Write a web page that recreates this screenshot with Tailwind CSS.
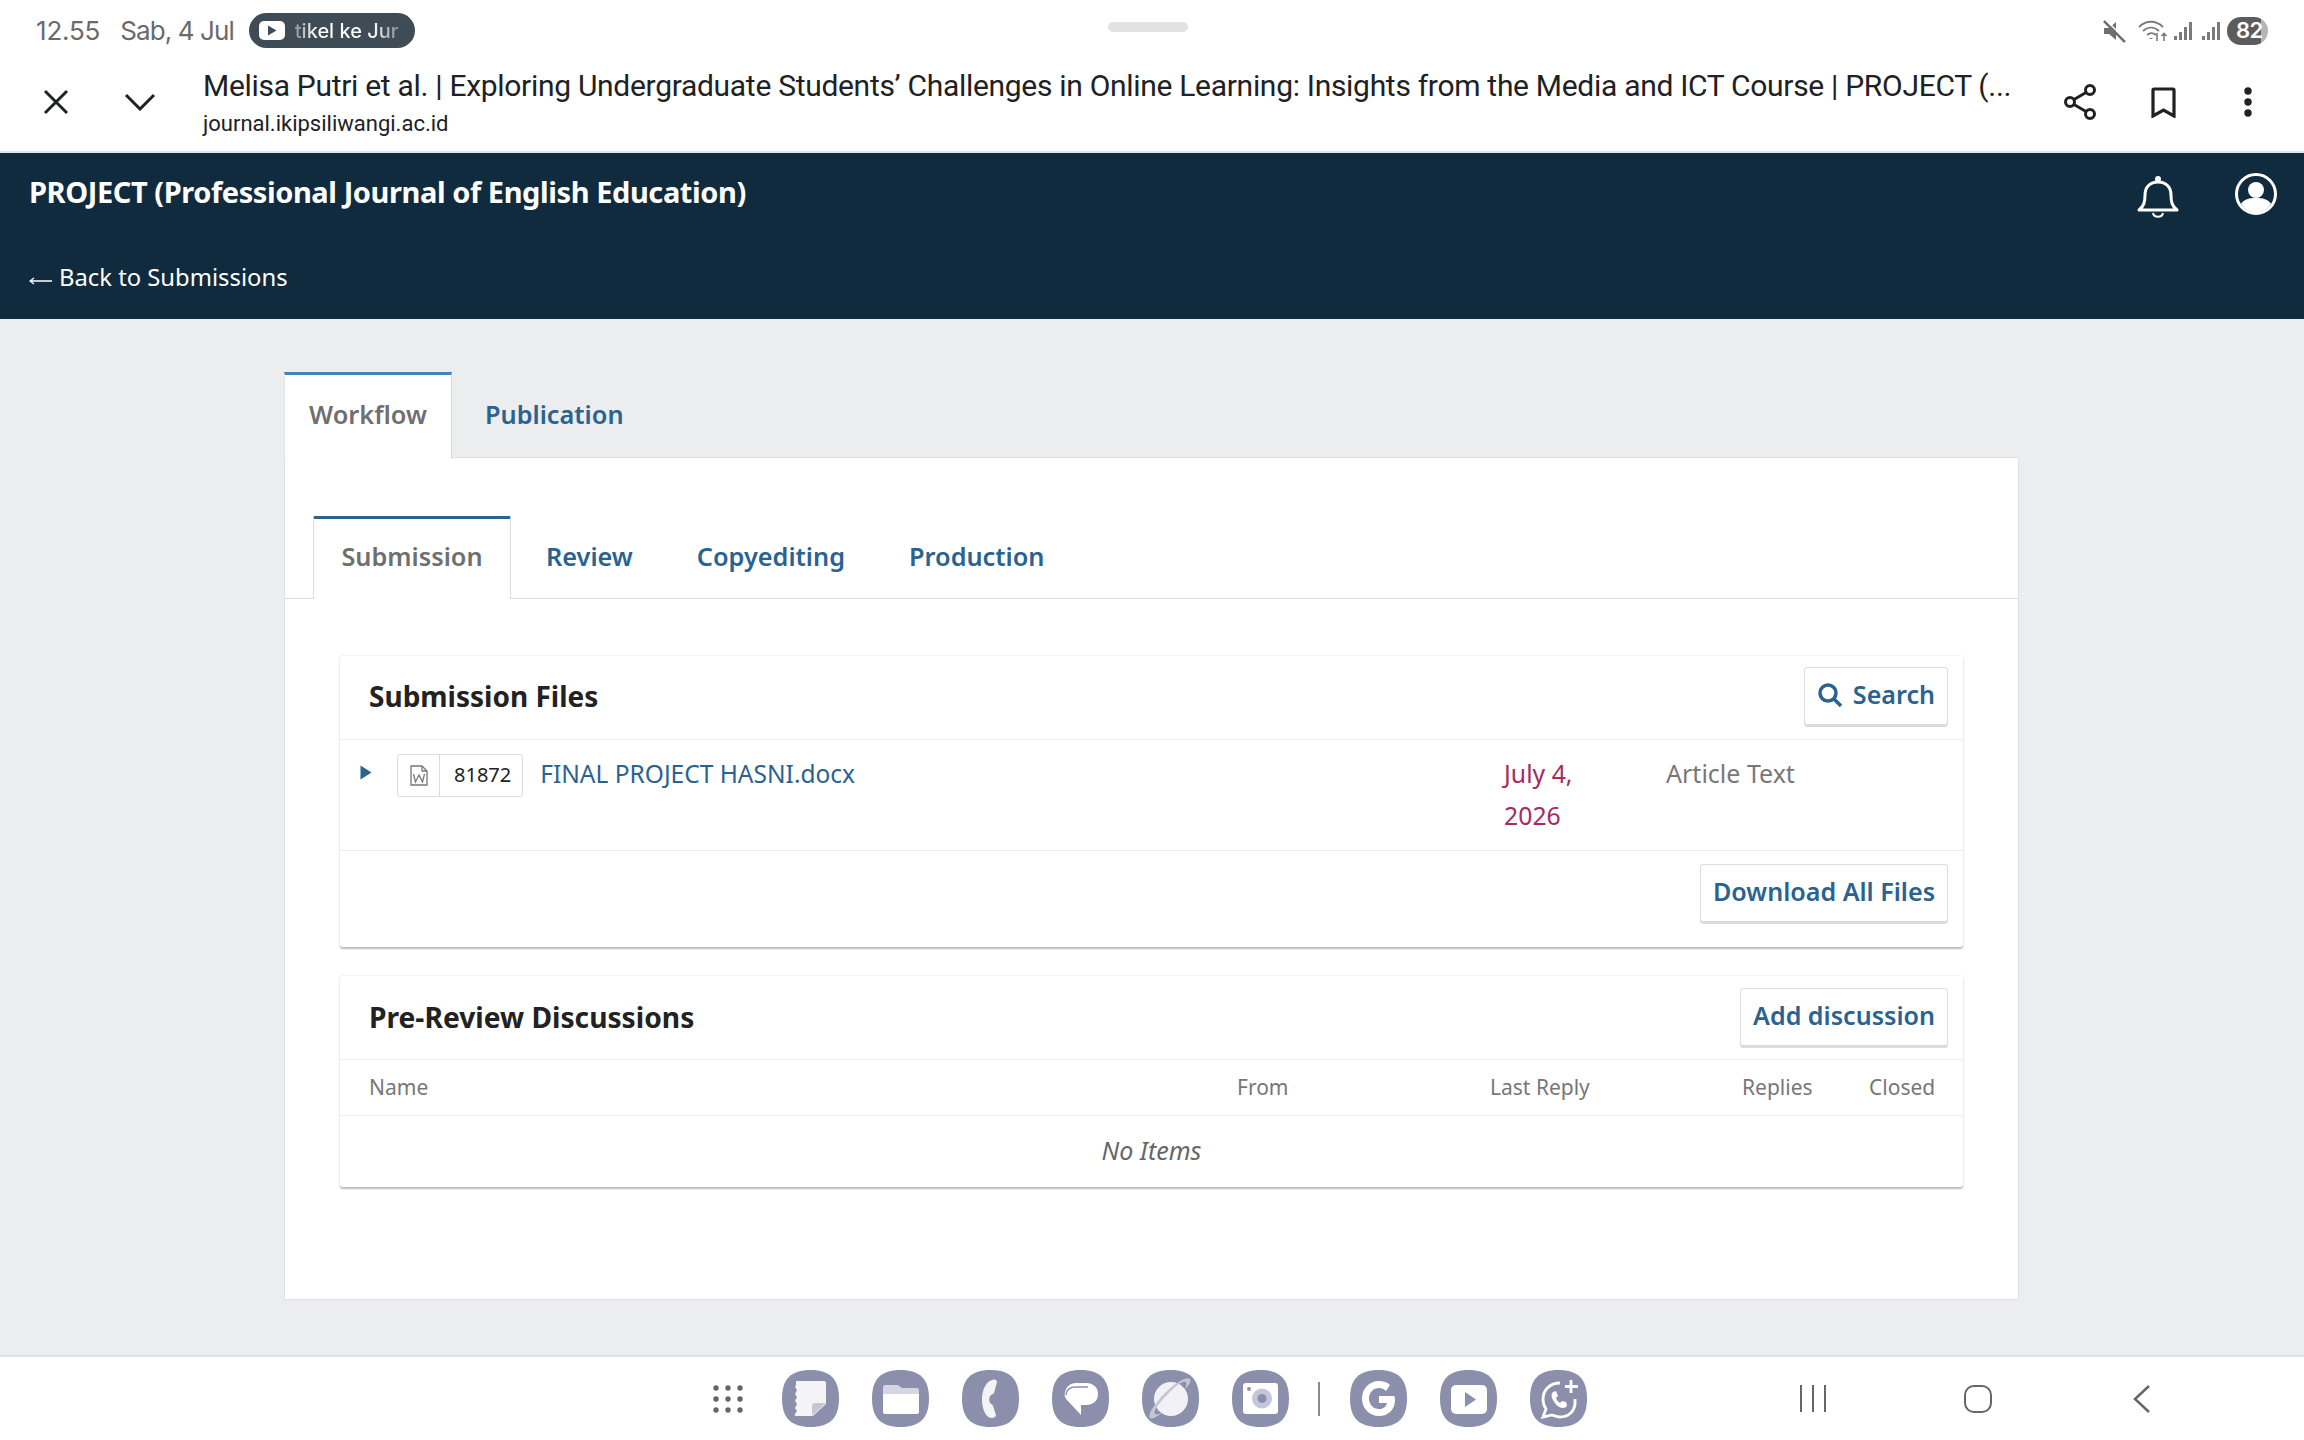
<!DOCTYPE html>
<html lang="en">

<head>
    <meta charset="UTF-8">
    <meta name="viewport" content="width=device-width, initial-scale=1.0">
    <script src="https://cdn.jsdelivr.net/npm/@tailwindcss/browser@4"></script>
    <title>Submission - Workflow</title>
</head>

<body class="bg-[#ebedef]">
    <div class="flex flex-col h-[1440px] w-[2304px] overflow-hidden font-['Noto_Sans',sans-serif]">

        <!-- android status bar -->
        <div class="relative flex items-center h-[55px] shrink-0 bg-white pl-[36px] pr-[36px] pt-[6px] font-['Inter',sans-serif] text-[#6a6a6a] text-[26px]">
            <span class="tracking-[-0.2px]">12.55</span>
            <span class="ml-[20px] tracking-[-0.9px]">Sab, 4 Jul</span>
            <div class="flex items-center ml-[15px] h-[35px] w-[166px] rounded-full bg-[#3f4c55] pl-[10px]">
                <span class="flex items-center justify-center w-[26px] h-[19px] rounded-[5px] bg-white">
                    <svg width="10" height="11" viewBox="0 0 10 11"><path d="M1 0.5L9.500 5.500L1 10.500Z" fill="#3f4c55" /></svg>
                </span>
                <span class="ml-[10px] text-[20px] font-medium whitespace-nowrap bg-[linear-gradient(90deg,#8a949b,#fff_20%,#fff_75%,#7f8a91)] bg-clip-text text-transparent">tikel ke Jur</span>
            </div>
            <div class="absolute left-[1108px] top-[22px] w-[80px] h-[10px] rounded-full bg-[#e2e2e2]"></div>
            <div class="flex items-center ml-auto gap-[6px]">
                <svg width="24" height="24" viewBox="0 0 24 24" fill="#6f6f6f"><path d="M1 9h5l7-6v18l-7-6H1z" /><path d="M1 2l21 21" stroke="#6f6f6f" stroke-width="2.500" /><path d="M2 0l21 21" stroke="#fff" stroke-width="1.500" /></svg>
                <svg class="ml-[4px]" width="30" height="24" viewBox="0 0 30 24" fill="none" stroke="#7a7a7a" stroke-width="1.800"><path d="M2 8c7-7 17-7 24 0M6 12c5-4.500 11-4.500 16 0M10 16c3-2.500 6-2.500 9 0" /><path d="M14 19v1" stroke-width="3" /><path d="M20 14v8M27 22v-7M24.500 17l2.500-2.500 2.500 2.500" stroke-width="1.600" /></svg>
                <svg width="20" height="20" viewBox="0 0 20 20" fill="#7a7a7a"><rect x="1" y="15" width="3" height="4" /><rect x="6" y="11" width="3" height="8" /><rect x="11" y="6" width="3" height="13" /><rect x="16" y="1" width="3" height="18" /></svg>
                <svg class="ml-[2px]" width="20" height="20" viewBox="0 0 20 20" fill="#7a7a7a"><rect x="1" y="15" width="3" height="4" /><rect x="6" y="11" width="3" height="8" /><rect x="11" y="6" width="3" height="13" /><rect x="16" y="1" width="3" height="18" /></svg>
                <div class="flex items-center h-[28px] w-[41px] rounded-full bg-[linear-gradient(90deg,#5c5c5c_82%,#b5b5b5_82%)] pl-[9px] text-[22px] font-semibold text-white tracking-[-0.5px]">82</div>
            </div>
        </div>

        <!-- custom tab toolbar -->
        <div class="flex items-center h-[98px] shrink-0 bg-white border-b-[2px] border-[#dde3ea]">
            <div class="flex justify-center w-[112px] mb-[2px]">
                <svg width="26" height="26" viewBox="0 0 26 26" fill="none" stroke="#202124" stroke-width="3"><path d="M2 2l22 22M24 2L2 24" /></svg>
            </div>
            <div class="flex justify-center w-[56px] mb-[2px]">
                <svg width="32" height="18" viewBox="0 0 32 18" fill="none" stroke="#202124" stroke-width="3"><path d="M2 2l14 14L30 2" /></svg>
            </div>
            <div class="flex flex-col shrink-0 ml-[35px] w-[1815px] mb-[1px] font-['Roboto',sans-serif] text-[#202124]">
                <div class="text-[30px] leading-[42px] whitespace-nowrap tracking-[-0.3px]">Melisa Putri et al. | Exploring Undergraduate Students’ Challenges in Online Learning: Insights from the Media and ICT Course | PROJECT (...</div>
                <div class="text-[22px] leading-[32px] mt-[1px]">journal.ikipsiliwangi.ac.id</div>
            </div>
            <div class="flex items-center ml-[46px] mb-[2px] gap-[55px]">
                <svg width="32" height="36" viewBox="0 0 32 36" fill="none" stroke="#202124" stroke-width="3"><circle cx="6" cy="18" r="4.500" /><circle cx="26" cy="6" r="4.500" /><circle cx="26" cy="30" r="4.500" /><path d="M10 15.500l12-7M10 20.500l12 7" /></svg>
                <svg width="25" height="31" viewBox="0 0 25 31" fill="none" stroke="#202124" stroke-width="3.200"><path d="M2 29V3c0-.6.4-1 1-1h19c.6 0 1 .4 1 1v26l-10.500-6z" /></svg>
                <svg class="ml-[13px]" width="8" height="30" viewBox="0 0 8 30" fill="#202124"><circle cx="4" cy="4" r="3.700" /><circle cx="4" cy="15" r="3.700" /><circle cx="4" cy="26" r="3.700" /></svg>
            </div>
        </div>

        <!-- app header -->
        <div class="relative flex flex-col h-[166px] shrink-0 bg-[#112b3e] pl-[29px] text-white">
            <div class="mt-[18px] text-[29px] leading-[42px] font-bold tracking-[-0.42px]">PROJECT (Professional Journal of English Education)</div>
            <div class="flex items-center mt-[47px] text-[23.800px] leading-[34px]">
                <svg class="mr-[7px] mt-[7px]" width="23" height="8" viewBox="0 0 23 8" fill="none" stroke="#fff" stroke-width="1.300"><path d="M23 4H1M5 1L1 4l4 3" /></svg>Back to Submissions
            </div>
            <div class="absolute top-[20px] right-[27px] flex items-start gap-[56px]">
                <svg class="mt-[2px]" width="42" height="44" viewBox="0 0 42 44" fill="none" stroke="#fff" stroke-width="3"><path d="M2 35c5-4 6-8 6-15 0-8 5-13 13-13s13 5 13 13c0 7 1 11 6 15z" stroke-linejoin="round" /><circle cx="21" cy="4" r="1.500" fill="#fff" /><path d="M16 38c1 5 9 5 10 0" stroke-width="2" /></svg>
                <svg width="42" height="42" viewBox="0 0 42 42"><circle cx="21" cy="21" r="19.500" fill="none" stroke="#fff" stroke-width="3" /><circle cx="21" cy="17" r="8" fill="#fff" /><path d="M6 31c3-5 8-6 15-6s12 1 15 6c-3.500 5-9 8.500-15 8.500S9.500 36 6 31z" fill="#fff" /></svg>
            </div>
        </div>

        <!-- page -->
        <div class="flex-1 pl-[284px] pt-[53px]">
            <div class="w-[1735px]">
                <div class="flex h-[85px] text-[25.300px] font-semibold">
                    <div class="relative z-10 flex items-center w-[168px] h-[87px] pb-[5px] justify-center bg-white border-t-[3px] border-[#3d84c0] border-r border-r-[#d8d9db] border-l border-l-[#e2e3e5] text-[#6f6f6f]">Workflow</div>
                    <div class="flex items-center pl-[33px] text-[#2a6290]">Publication</div>
                </div>
                <div class="h-[843px] bg-white border border-[#dfe0e2] pt-[58px]">
                    <div class="flex h-[83px] border-b border-[#dcdcdc] pl-[28px] text-[25.300px] font-semibold">
                        <div class="flex items-center justify-center w-[198px] h-[83px] pb-[4px] bg-white border-t-[3px] border-[#2a6290] border-x border-x-[#dcdcdc] rounded-t-[2px] text-[#6f6f6f]">Submission</div>
                        <div class="flex items-center gap-[64px] pl-[35px] text-[#2a6290]">
                            <span>Review</span><span>Copyediting</span><span>Production</span>
                        </div>
                    </div>

                    <div class="flex flex-col gap-[28px] mx-[55px] mt-[56px]">
                        <!-- submission files -->
                        <div class="h-[292px] rounded-[3px] bg-white border-t border-[#f3f3f3] shadow-[0_2px_2px_rgba(0,0,0,0.28)]">
                            <div class="flex items-center justify-between h-[84px] border-b border-[#ececec] pl-[29px] pr-[15px]">
                                <span class="text-[28px] font-bold text-[#222] mb-[3px]">Submission Files</span>
                                <div class="flex items-center h-[58px] gap-[11px] pl-[13px] pr-[12px] pb-[2px] mb-[3px] bg-white border border-[#dcdcdc] rounded-[3px] shadow-[0_2px_0_#dcdcdc] text-[25.100px] font-semibold text-[#2a6290]">
                                    <svg width="24" height="24" viewBox="0 0 24 24" fill="none" stroke="#2a6290" stroke-width="3.500"><circle cx="10" cy="10" r="8" /><path d="M16 16l7 7" /></svg>
                                    Search
                                </div>
                            </div>
                            <div class="flex h-[111px] border-b border-[#ececec] text-[25px]">
                                <svg class="mt-[25px] ml-[20px]" width="12" height="15" viewBox="0 0 12 15"><path d="M0.500 0.500L11.500 7.500L0.500 14.500Z" fill="#2a6290" /></svg>
                                <div class="flex items-center h-[43px] mt-[14px] ml-[25px] border border-[#dcdcdc] rounded-[3px] text-[20px] text-[#222]">
                                    <span class="flex items-center justify-center w-[42px] h-full border-r border-[#dcdcdc]">
                                        <svg width="18" height="21" viewBox="0 0 18 21" fill="none" stroke="#777" stroke-width="1.300"><path d="M1 1h11l5 5v14H1z" /><path d="M12 1v5h5" /><path d="M3.500 9l2 8 3.500-7 3.500 7 2-8" /></svg>
                                    </span>
                                    <span class="pl-[14px] pr-[11px] pb-[2px]">81872</span>
                                </div>
                                <span class="ml-[17px] mt-[14px] h-[40px] leading-[40px] text-[24.500px] text-[#2a6290]">FINAL PROJECT HASNI.docx</span>
                                <div class="w-[80px] ml-[649px] mt-[12px] leading-[42px] text-[24.800px] text-[#a52a64]">July 4, 2026</div>
                                <span class="ml-[82px] mt-[12px] leading-[42px] text-[#777]">Article Text</span>
                            </div>
                            <div class="flex items-start justify-end h-[96px] pr-[15px] pt-[13px]">
                                <div class="flex items-center h-[58px] px-[12px] pb-[2px] bg-white border border-[#dcdcdc] rounded-[3px] shadow-[0_2px_0_#dcdcdc] text-[25.100px] font-semibold text-[#2a6290]">Download All Files</div>
                            </div>
                        </div>

                        <!-- discussions -->
                        <div class="h-[212px] rounded-[3px] bg-white border-t border-[#f3f3f3] shadow-[0_2px_2px_rgba(0,0,0,0.28)]">
                            <div class="flex items-center justify-between h-[84px] border-b border-[#ececec] pl-[29px] pr-[15px]">
                                <span class="text-[28.200px] font-bold text-[#222]">Pre-Review Discussions</span>
                                <div class="flex items-center h-[58px] px-[12px] pb-[2px] mb-[2px] bg-white border border-[#dcdcdc] rounded-[3px] shadow-[0_2px_0_#dcdcdc] text-[25.100px] font-semibold text-[#2a6290]">Add discussion</div>
                            </div>
                            <div class="grid grid-cols-[868px_253px_252px_127px_1fr] items-center h-[56px] pt-[1px] border-b border-[#ececec] pl-[29px] text-[21px] text-[#777]">
                                <span>Name</span><span>From</span><span>Last Reply</span><span>Replies</span><span>Closed</span>
                            </div>
                            <div class="flex items-center justify-center h-[70px] text-[25px] italic text-[#666]">No Items</div>
                        </div>
                    </div>
                </div>
            </div>
        </div>

        <!-- android nav bar -->
        <div class="flex items-center h-[85px] shrink-0 bg-white border-t-[2px] border-[#e0e0e0] pl-[713px]">
            <svg class="mr-[39px]" width="30" height="30" viewBox="0 0 30 30" fill="#666"><circle cx="3" cy="4" r="2.700" /><circle cx="15" cy="4" r="2.700" /><circle cx="27" cy="4" r="2.700" /><circle cx="3" cy="15" r="2.700" /><circle cx="15" cy="15" r="2.700" /><circle cx="27" cy="15" r="2.700" /><circle cx="3" cy="26" r="2.700" /><circle cx="15" cy="26" r="2.700" /><circle cx="27" cy="26" r="2.700" /></svg>
            <div class="flex items-center gap-[33px]">
                <!-- notes -->
                <svg width="57" height="57" viewBox="0 0 57 57"><path d="M28.500 0C48 0 57 9 57 28.500S48 57 28.500 57 0 48 0 28.500 9 0 28.500 0z" fill="#8b8fac" /><path d="M14 11h28c1.500 0 2 1 2 2v21L31 46H14c-1 0-2-1-1-2l2-3-2-3 2-4-2-3 2-4-2-3 2-4-2-3 1-2z" fill="#f4f4f6" /><path d="M30 46V36c0-2 1-3 3-3h11z" fill="#c4c6d4" /></svg>
                <!-- files -->
                <svg width="57" height="57" viewBox="0 0 57 57"><path d="M28.500 0C48 0 57 9 57 28.500S48 57 28.500 57 0 48 0 28.500 9 0 28.500 0z" fill="#8b8fac" /><path d="M11 17c0-1 1-2 2-2h13l4 3h15c1 0 2 1 2 2v4H11z" fill="#d5d6e2" /><path d="M11 24h36v18c0 1-1 2-2 2H13c-1 0-2-1-2-2z" fill="#fff" /></svg>
                <!-- phone -->
                <svg width="57" height="57" viewBox="0 0 57 57"><path d="M28.500 0C48 0 57 9 57 28.500S48 57 28.500 57 0 48 0 28.500 9 0 28.500 0z" fill="#8b8fac" /><path d="M30 10c3-1 5 0 5 2l-3 11c-1 1-3 2-4 3-1 3-1 5 0 7 1 1 3 2 3 3l3 9c0 2-2 3-5 3-5-1-9-8-9-19 0-10 5-18 10-19z" fill="#f4f4f6" /></svg>
                <!-- messages -->
                <svg width="57" height="57" viewBox="0 0 57 57"><path d="M28.500 0C48 0 57 9 57 28.500S48 57 28.500 57 0 48 0 28.500 9 0 28.500 0z" fill="#8b8fac" /><path d="M24 13h10c7 0 12 4 12 11s-5 11-12 11h-5v10L15 30c-2-2-3-5-2-8 1-5 5-9 11-9z" fill="#fff" /><path d="M14 25c0-5 4-8 9-8h13" fill="none" stroke="#8b8fac" stroke-width="1.500" /></svg>
                <!-- internet -->
                <svg width="57" height="57" viewBox="0 0 57 57"><path d="M28.500 0C48 0 57 9 57 28.500S48 57 28.500 57 0 48 0 28.500 9 0 28.500 0z" fill="#8b8fac" /><circle cx="29" cy="29" r="17" fill="#f2f2f6" /><path d="M8 48c-3-3 5-15 15-25S45 6 48 9c2 2-2 7-5 11 1-4 2-7 1-8-3-2-12 5-19 13C17 33 11 41 13 44c1 1 5 0 8-2-5 4-11 8-13 6z" fill="#c4c6d4" /></svg>
                <!-- camera -->
                <svg width="57" height="57" viewBox="0 0 57 57"><path d="M28.500 0C48 0 57 9 57 28.500S48 57 28.500 57 0 48 0 28.500 9 0 28.500 0z" fill="#8b8fac" /><rect x="11" y="13" width="35" height="31" rx="3" fill="#fff" /><circle cx="30" cy="28.500" r="10" fill="#c4c6d9" /><circle cx="30" cy="28.500" r="4.500" fill="#8b8fac" /><circle cx="17" cy="19" r="2" fill="#8b8fac" /></svg>
            </div>
            <div class="w-[2px] h-[34px] ml-[29px] mr-[30px] bg-[#8a8a8a]"></div>
            <div class="flex items-center gap-[33px]">
                <!-- google -->
                <svg width="57" height="57" viewBox="0 0 57 57"><path d="M28.500 0C48 0 57 9 57 28.500S48 57 28.500 57 0 48 0 28.500 9 0 28.500 0z" fill="#8b8fac" /><path d="M40 15c-3-3-7-4-11-4-10 0-17 8-17 17.500S19 46 29 46c9 0 16-6 16-16 0-2 0-3-1-4H29v7h8c-1 4-4 6-8 6-6 0-10-5-10-10.500S23 18 29 18c3 0 5 1 7 3z" fill="#fff" /></svg>
                <!-- youtube -->
                <svg width="57" height="57" viewBox="0 0 57 57"><path d="M28.500 0C48 0 57 9 57 28.500S48 57 28.500 57 0 48 0 28.500 9 0 28.500 0z" fill="#8b8fac" /><rect x="11" y="15" width="36" height="29" rx="5" fill="#fff" /><path d="M25 22l11 7.500L25 37z" fill="#8b8fac" /></svg>
                <!-- whatsapp plus -->
                <svg width="57" height="57" viewBox="0 0 57 57"><path d="M28.500 0C48 0 57 9 57 28.500S48 57 28.500 57 0 48 0 28.500 9 0 28.500 0z" fill="#8b8fac" /><path d="M30 13c-10 0-17 7-17 16 0 4 1 7 3 10l-3 8 9-2c3 1 5 2 8 2 8 0 14-5 15-13 0-2 0-3 0-5" fill="none" stroke="#fff" stroke-width="2.800" /><path d="M23 22c-2 2-2 5 0 8 2 4 5 7 9 8 3 0 5-1 5-3l-1-3-4-1-2 2c-2-1-3-3-4-5l2-2-2-5z" fill="#fff" /><path d="M41 10v13M35 16.500h13" stroke="#fff" stroke-width="2.800" /></svg>
            </div>
            <div class="flex items-center ml-[213px] gap-[10px]">
                <div class="w-[2px] h-[27px] bg-[#666]"></div><div class="w-[2px] h-[27px] bg-[#666]"></div><div class="w-[2px] h-[27px] bg-[#666]"></div>
            </div>
            <div class="w-[28px] h-[28px] ml-[138px] rounded-[10px] border-[2.5px] border-[#666]"></div>
            <svg class="ml-[141px]" width="18" height="28" viewBox="0 0 18 28" fill="none" stroke="#666" stroke-width="2.500"><path d="M16 1L2 14l14 13" /></svg>
        </div>
    </div>
</body>

</html>
